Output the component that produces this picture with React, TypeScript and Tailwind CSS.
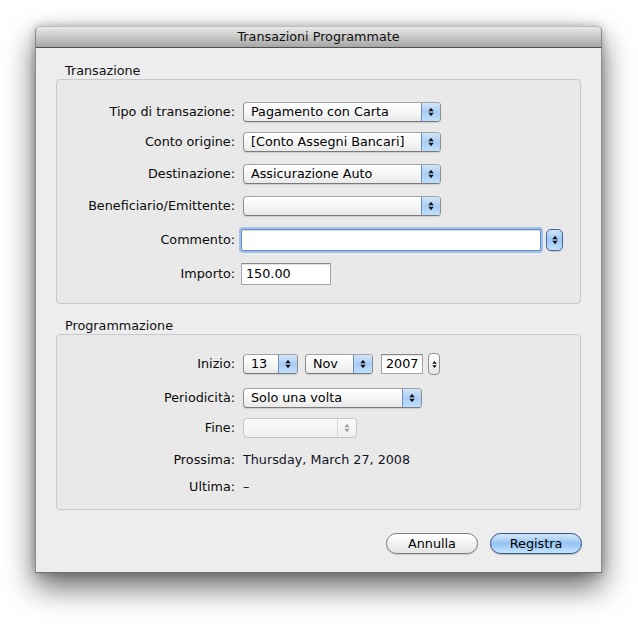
import React from "react";

const FONT = { fontFamily: '"DejaVu Sans", "Liberation Sans", sans-serif' };

function Arrows({ color = "#111", w = 6, h = 10 }: { color?: string; w?: number; h?: number }) {
  return (
    <svg width={w} height={h} viewBox="0 0 6 10">
      <path d="M0.3 4.2 L3 0.8 L5.7 4.2 Z" fill={color} />
      <path d="M0.3 5.8 L3 9.2 L5.7 5.8 Z" fill={color} />
    </svg>
  );
}

function Popup({ value, width }: { value?: string; width: number }) {
  return (
    <div
      className="relative h-[20px] flex items-center rounded-[4px] border border-[#8e8e8e] border-t-[#a3a3a3] border-b-[#7a7a7a] bg-gradient-to-b from-[#ffffff] via-[#f7f7f7] to-[#e9e9e9] shadow-[0_1px_1px_rgba(0,0,0,0.12)] overflow-hidden"
      style={{ width }}
    >
      <span className="flex-1 pl-[7px] text-[12.75px] leading-[18px] text-black whitespace-nowrap">{value}</span>
      <div className="h-full w-[19px] flex items-center justify-center border-l border-[#6d8fbd] bg-gradient-to-b from-[#d4e6fa] via-[#a9cdf4] to-[#bfe0fd]">
        <Arrows />
      </div>
    </div>
  );
}

function DisabledPopup({ width }: { width: number }) {
  return (
    <div
      className="h-[20px] flex items-center rounded-[4px] border border-[#c4c4c4] bg-gradient-to-b from-[#fbfbfb] to-[#efefef] overflow-hidden"
      style={{ width }}
    >
      <span className="flex-1" />
      <div className="h-full w-[19px] flex items-center justify-center border-l border-[#d8d8d8]">
        <Arrows color="#a0a0a0" />
      </div>
    </div>
  );
}

function Label({ children }: { children: React.ReactNode }) {
  return (
    <div className="w-[178px] shrink-0 text-right text-[12.75px] leading-[16px] text-[#0a0a0a] whitespace-nowrap">
      {children}
    </div>
  );
}

function Row({ label, children, className = "" }: { label: string; children: React.ReactNode; className?: string }) {
  return (
    <div className={"flex items-center " + className}>
      <Label>{label}</Label>
      {children}
    </div>
  );
}

export default function App() {
  return (
    <div className="w-[638px] h-[642px] bg-white pl-[35px] pt-[26px]" style={FONT}>
      <div className="w-[567px] h-[547px] flex flex-col rounded-t-[5px] shadow-[0_14px_30px_rgba(0,0,0,0.6),0_0_10px_rgba(0,0,0,0.25)]">
        {/* title bar */}
        <div className="h-[22px] shrink-0 flex items-center justify-center rounded-t-[5px] border border-b-[#4f4f4f] border-x-[#8a8a8a] border-t-[#bdbdbd] bg-gradient-to-b from-[#e9e9e9] via-[#c9c9c9] to-[#a6a6a6]">
          <span className="text-[12.75px] leading-[16px] text-[#111]">Transazioni Programmate</span>
        </div>

        {/* body */}
        <div className="flex-1 flex flex-col bg-[#ededed] border-x border-b border-x-[#8c8c8c] border-b-[#6f6f6f] px-[20px] pt-[15px]">
          <div className="h-[16px] pl-[9px] text-[12.75px] leading-[16px] text-[#111]">Transazione</div>
          <div className="h-[225px] flex flex-col border border-[#c8c8c8] rounded-[4px] bg-[#e9e9e9] pt-[22px]">
            <Row label="Tipo di transazione:" className="h-[20px]">
              <div className="ml-[8px]"><Popup value="Pagamento con Carta" width={198} /></div>
            </Row>
            <Row label="Conto origine:" className="mt-[10px] h-[20px]">
              <div className="ml-[8px]"><Popup value="[Conto Assegni Bancari]" width={198} /></div>
            </Row>
            <Row label="Destinazione:" className="mt-[12px] h-[20px]">
              <div className="ml-[8px]"><Popup value="Assicurazione Auto" width={198} /></div>
            </Row>
            <Row label="Beneficiario/Emittente:" className="mt-[12px] h-[20px]">
              <div className="ml-[8px]"><Popup width={198} /></div>
            </Row>
            <Row label="Commento:" className="mt-[13px] h-[22px]">
              <div className="ml-[6px] w-[300px] h-[22px] rounded-[2px] border border-[#5f8fcc] bg-white shadow-[0_0_0_2px_rgba(110,158,220,0.55),inset_0_1px_1px_rgba(0,0,0,0.15)]" />
              <div className="ml-[5px] w-[17px] h-[22px] rounded-[5px] border border-[#47679a] flex items-center justify-center bg-gradient-to-b from-[#d0e4fa] via-[#9cc6f3] to-[#c3e2fd] shadow-[0_1px_1px_rgba(0,0,0,0.15)]">
                <Arrows />
              </div>
            </Row>
            <Row label="Importo:" className="mt-[12px] h-[22px]">
              <div className="ml-[6px] w-[90px] h-[22px] flex items-center border border-[#a5a5a5] border-t-[#8a8a8a] bg-white shadow-[inset_0_1px_1px_rgba(0,0,0,0.12)] pl-[4px] text-[12.75px] leading-[16px] text-black">
                150.00
              </div>
            </Row>
          </div>

          <div className="mt-[14px] h-[16px] pl-[9px] text-[12.75px] leading-[16px] text-[#111]">Programmazione</div>
          <div className="h-[176px] flex flex-col border border-[#c8c8c8] rounded-[4px] bg-[#e9e9e9] pt-[19px]">
            <Row label="Inizio:" className="h-[20px]">
              <div className="ml-[8px] h-[20px] flex items-center">
                <Popup value="13" width={55} />
                <div className="ml-[7px]"><Popup value="Nov" width={68} /></div>
                <div className="ml-[8px] w-[42px] h-[20px] flex items-center border border-[#a5a5a5] border-t-[#8a8a8a] bg-white pl-[4px] text-[12.75px] leading-[16px] text-black shadow-[inset_0_1px_1px_rgba(0,0,0,0.12)]">
                  2007
                </div>
                <div className="ml-[5px] w-[12px] h-[22px] shrink-0 rounded-[4px] border border-[#8e8e8e] bg-gradient-to-b from-[#ffffff] to-[#e6e6e6] flex items-center justify-center">
                  <Arrows w={5} h={9} />
                </div>
              </div>
            </Row>
            <Row label="Periodicità:" className="mt-[14px] h-[20px]">
              <div className="ml-[8px]"><Popup value="Solo una volta" width={179} /></div>
            </Row>
            <Row label="Fine:" className="mt-[10px] h-[20px]">
              <div className="ml-[8px]"><DisabledPopup width={114} /></div>
            </Row>
            <Row label="Prossima:" className="mt-[12px] h-[20px]">
              <span className="ml-[8px] text-[12.75px] leading-[16px] text-[#141428]">Thursday, March 27, 2008</span>
            </Row>
            <Row label="Ultima:" className="mt-[7px] h-[20px]">
              <span className="ml-[8px] text-[12.75px] leading-[16px] text-[#111]">–</span>
            </Row>
          </div>

          <div className="mt-[23px] flex justify-end gap-[12px] mr-[-1px]">
            <button className="w-[92px] h-[21px] rounded-full border border-[#7d7d7d] bg-gradient-to-b from-[#ffffff] via-[#f3f3f3] to-[#e3e3e3] text-[12.75px] leading-[16px] text-black shadow-[0_1px_1px_rgba(0,0,0,0.15)]">
              Annulla
            </button>
            <button className="w-[92px] h-[21px] rounded-full border border-[#34528a] bg-gradient-to-b from-[#d6e8fb] via-[#94c3f2] to-[#c6e5fe] text-[12.75px] leading-[16px] text-black shadow-[0_1px_1px_rgba(0,0,0,0.2)]">
              Registra
            </button>
          </div>
        </div>
      </div>
    </div>
  );
}
